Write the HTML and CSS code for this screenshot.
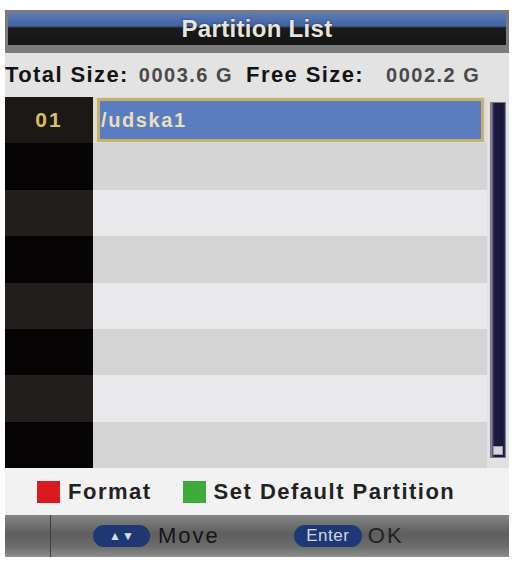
FILE: index.html
```html
<!DOCTYPE html>
<html>
<head>
<meta charset="utf-8">
<link rel="stylesheet" href="styles.css">
</head>
<body>
<div class="screen">
  <div class="title">Partition List</div>
  <div class="info">
    <span class="lbl">Total Size:</span>
    <span class="val v1">0003.6 G</span>
    <span class="lbl l2">Free Size:</span>
    <span class="val v2">0002.2 G</span>
  </div>
  <div class="list">
    <div class="grid">
      <div class="num n-odd">01</div><div class="cell c-sel"><div class="sel">/udska1</div></div>
      <div class="num n-even"></div><div class="cell c-even"></div>
      <div class="num n-odd"></div><div class="cell c-odd"></div>
      <div class="num n-even"></div><div class="cell c-even"></div>
      <div class="num n-odd"></div><div class="cell c-odd"></div>
      <div class="num n-even"></div><div class="cell c-even"></div>
      <div class="num n-odd"></div><div class="cell c-odd"></div>
      <div class="num n-even"></div><div class="cell c-even"></div>
    </div>
    <div class="scrollcol">
      <div class="scrollbar"><div class="thumb"></div></div>
    </div>
  </div>
  <div class="legend">
    <span class="key red"></span><span class="ltxt">Format</span>
    <span class="key green"></span><span class="ltxt">Set Default Partition</span>
  </div>
  <div class="footer">
    <div class="divider"></div>
    <span class="pill arrows"><span class="tri">▲</span><span class="tri">▼</span></span>
    <span class="ftxt move">Move</span>
    <span class="pill enter">Enter</span>
    <span class="ftxt ok">OK</span>
  </div>
</div>
</body>
</html>
```

FILE: styles.css
```css
html, body {
  margin: 0;
  padding: 0;
  background: #ffffff;
}
body {
  font-family: "Liberation Sans", Arial, sans-serif;
}
.screen {
  margin: 10px 0 0 5px;
  width: 504px;
}
.title {
  height: 32px;
  border: 3px solid #7c7c7c;
  border-bottom-width: 8px;
  background: linear-gradient(#5b7bb9 0, #4262a0 13px, #1c1c1e 15px, #141414 32px);
  color: #e6e4dc;
  font-size: 24px;
  font-weight: bold;
  line-height: 32px;
  text-align: center;
  letter-spacing: 0.3px;
  text-shadow: 0 0 2px rgba(0,0,0,0.6);
}
.info {
  height: 44px;
  background: #e3e3e3;
  display: flex;
  align-items: center;
  white-space: nowrap;
}
.lbl {
  font-size: 22px;
  font-weight: bold;
  color: #141414;
  letter-spacing: 1.4px;
}
.l2 { margin-left: 13px; }
.val {
  font-size: 20px;
  font-weight: bold;
  color: #4a4a4a;
  letter-spacing: 1.5px;
}
.v1 { margin-left: 10px; }
.v2 { margin-left: 22px; }
.list {
  display: flex;
  height: 371px;
  background: #e2e2e2;
}
.grid {
  width: 482px;
  display: grid;
  grid-template-columns: 88px 1fr;
  grid-template-rows: repeat(8, 1fr);
}
.num {
  display: flex;
  align-items: center;
  justify-content: center;
  color: #dcbc5c;
  font-size: 21px;
  font-weight: bold;
  letter-spacing: 2px;
}
.n-odd { background: #1c1815; }
.n-even { background: #050303; }
.num:nth-child(5), .num:nth-child(9), .num:nth-child(13) { background: #221e1b; }
.c-even { background: #d4d4d4; }
.c-odd { background: #e9e9eb; }
.c-sel {
  background: #dedbd0;
  padding: 1px 3px 1px 4px;
  display: flex;
}
.sel {
  flex: 1;
  border: 3px solid #c8b170;
  background: #5a7dc0;
  color: #e8dfbc;
  font-size: 20px;
  font-weight: bold;
  letter-spacing: 1.6px;
  display: flex;
  align-items: center;
  padding-left: 1px;
}
.scrollcol {
  flex: 1;
  padding: 5px 3px 10px 3px;
  display: flex;
}
.scrollbar {
  flex: 1;
  border: 1px solid #7a7a84;
  background: linear-gradient(90deg, #9a9aae 0, #1e1c44 3px, #171538 12px, #5c5c70 16px);
  display: flex;
  flex-direction: column;
  justify-content: flex-end;
  padding: 0 2px 2px 2px;
}
.thumb {
  height: 7px;
  background: #d6d6da;
  border: 1px solid #9a9aa4;
}
.legend {
  height: 47px;
  background: #f2f2f2;
  display: flex;
  align-items: center;
  white-space: nowrap;
}
.key {
  width: 23px;
  height: 22px;
  display: inline-block;
}
.red { background: #d91a1e; margin-left: 32px; }
.green { background: #3daa3a; margin-left: 31px; }
.ltxt {
  font-size: 22px;
  font-weight: bold;
  color: #222222;
  letter-spacing: 1.5px;
  margin-left: 8px;
}
.footer {
  position: relative;
  height: 42px;
  background: linear-gradient(#858585 0, #5e5e5e 45%, #6c6c6c 75%, #8e8e8e 100%);
  display: flex;
  align-items: center;
  white-space: nowrap;
}
.divider {
  position: absolute;
  left: 45px;
  top: 0;
  bottom: 0;
  width: 1px;
  background: #3e3e3e;
}
.pill {
  height: 22px;
  border-radius: 11px;
  background: #1d3872;
  display: inline-flex;
  align-items: center;
  justify-content: center;
  color: #cfd6ea;
}
.arrows {
  width: 57px;
  margin-left: 88px;
  gap: 1px;
}
.tri {
  font-size: 12px;
  color: #d8e0f4;
  line-height: 1;
}
.enter {
  width: 68px;
  margin-left: 74px;
  font-size: 17px;
  letter-spacing: 0.5px;
}
.ftxt {
  font-size: 22px;
  color: #161616;
  letter-spacing: 2px;
}
.move { margin-left: 8px; }
.ok { margin-left: 6px; color: #222222; }
```
